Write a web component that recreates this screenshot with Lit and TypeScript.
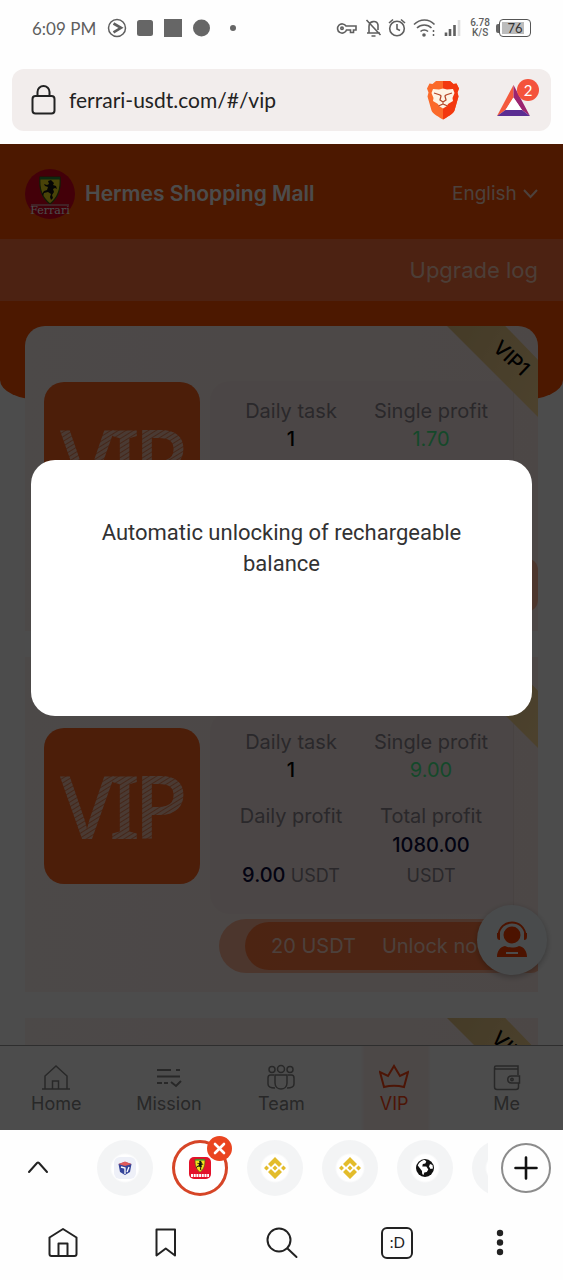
import { LitElement, html, css, svg, nothing } from "lit";
import { customElement, property } from "lit/decorators.js";

interface Terms {
  tasks: string;
  single: string;
  daily: string;
  total: string;
  price: string;
}

interface Plan {
  name: string;
  terms?: Terms;
}

const PLANS: Plan[] = [
  { name: "VIP1", terms: { tasks: "1", single: "1.70", daily: "1.70", total: "204", price: "5 USDT" } },
  { name: "VIP2", terms: { tasks: "1", single: "9.00", daily: "9.00", total: "1080.00", price: "20 USDT" } },
  { name: "VIP3" },
];

const crest = svg`
  <path d="M15 9h20c1 10-1 20-10 27C16 29 14 19 15 9z" fill="#f4e01c" stroke="#3c5a14" stroke-width="1.2"/>
  <path d="M15 9h20v2.600H15z" fill="#2b8a3a"/>
  <path d="M23 13l3-1 3 3-1 2 3 1 1 3-2-1-2 1 1 3-2 3 1 3-2 2-1-3 1-3-3-2-4 1-1 3-1-2 2-3 3-1 1-3-3-1-1-2 3 1 2-1z" fill="#111"/>`;

@customElement("status-bar")
class StatusBar extends LitElement {
  static styles = css`
    :host { display: flex; align-items: center; justify-content: space-between; height: 56px; padding: 0 32px; font-family: Lato, "Noto Sans", sans-serif; color: #5f5f5f; }
    .group { display: flex; align-items: center; }
    .left { gap: 8px; }
    .right { gap: 6px; }
    .time { font-size: 17px; }
    .rate { font: 500 10px/10px Roboto, sans-serif; text-align: center; }
    .battery { display: flex; align-items: center; }
    .nub { width: 3px; height: 9px; background: #666; border-radius: 2px 0 0 2px; }
    .cell { box-sizing: border-box; width: 32px; height: 18px; border: 1px solid #555; border-radius: 4px; padding: 2px; display: flex; }
    .charge { flex: 1; background: linear-gradient(90deg, #bcbcbc 84%, #fff 84%); font-size: 13px; line-height: 12px; text-align: center; color: #333; }
  `;
  render() {
    return html`
      <div class="group left">
        <span class="time">6:09 PM</span>
        <svg width="154" height="22" viewBox="0 0 154 22">
          <circle cx="13" cy="11" r="8.500" fill="none" stroke="#5f5f5f" stroke-width="1.500"/>
          <path d="M9.500 6.500l7.500 4.300-7.500 4.500" fill="none" stroke="#5f5f5f" stroke-width="2.600"/>
          <rect x="33" y="3" width="16" height="16" rx="2.500" fill="#666"/>
          <rect x="60" y="2" width="18" height="18" fill="#666"/>
          <circle cx="97.500" cy="11" r="8.500" fill="#666"/>
          <circle cx="129" cy="11" r="3" fill="#666"/>
        </svg>
      </div>
      <div class="group right">
        <svg width="128" height="22" viewBox="0 0 128 22" fill="none" stroke="#5f5f5f" stroke-width="1.600">
          <path d="M9.500 9H20v4h-2.500v2.500h-3V13h-4A4.600 4.600 0 1 1 10 9z"/>
          <circle cx="6" cy="11.200" r="1.200"/>
          <path d="M31 16h13M33 15.500V9.500c0-6 8-6.500 9-1.500v5M30.500 3l14 15M35.500 19h4"/>
          <circle cx="61" cy="11.500" r="7.300"/>
          <path d="M61 7v5l3 1.500M53 6l4-3.500M69 6l-4-3.500"/>
          <path d="M78 7.500c6-6 15-6 20.500 0M81 11c4-4 10.500-4 14.500 0M84.500 14.500c2-2 5.500-2 7.500 0"/>
          <circle cx="88" cy="18" r="1" fill="#5f5f5f"/>
          <path d="M97.500 13v2M97.500 17v2" stroke-width="1.500"/>
          <path d="M110 19v-3.500M114 19v-7M118.500 19V8" stroke-width="2.600"/>
          <path d="M123 19V3" stroke="#ddd" stroke-width="2.600"/>
        </svg>
        <div class="rate">6.78<br />K/S</div>
        <div class="battery"><span class="nub"></span><span class="cell"><span class="charge">76</span></span></div>
      </div>`;
  }
}

@customElement("address-bar")
class AddressBar extends LitElement {
  static styles = css`
    :host { display: block; padding: 13px 12px; }
    .bar { display: flex; align-items: center; height: 62px; border-radius: 12px; background: #f2edec; padding: 0 12px 0 19px; }
    .url { flex: 1; min-width: 0; border: 0; background: none; outline: 0; padding: 0; margin-left: 12px; font: 21px/30px Lato, "Noto Sans", sans-serif; color: #222; }
    .icon { border: 0; background: none; padding: 0; display: flex; position: relative; }
    .rewards { margin-left: 33px; }
    .count { position: absolute; right: 0; top: 0; width: 22px; height: 22px; border-radius: 50%; background: #f4533c; color: #fff; font: 15px/22px Lato, sans-serif; text-align: center; }
  `;
  render() {
    return html`
      <form class="bar" @submit=${(e: Event) => e.preventDefault()}>
        <svg width="26" height="32" viewBox="0 0 26 32" fill="none" stroke="#222" stroke-width="2">
          <rect x="1.500" y="12" width="22" height="17.500" rx="3"/>
          <path d="M6.500 12V8a6 6 0 0 1 12 0v4"/>
        </svg>
        <input class="url" aria-label="Address" value="ferrari-usdt.com/#/vip" />
        <button class="icon" type="button" aria-label="Shields">
          <svg width="34" height="42" viewBox="0 0 34 42">
            <path d="M10 2h14l3.500 3 3-.5 2.500 5-1.500 4 1 4-4 14c-1 3-8 7-11.500 9C13.500 38.500 6.500 34.500 5.500 31.500l-4-14 1-4L1 9.500l2.500-5 3 .5z" fill="#fb6a2a"/>
            <path d="M17 2h7l3.500 3 3-.5 2.500 5-1.500 4 1 4-4 14c-1 3-8 7-11.500 9z" fill="#f3380f"/>
            <path d="M7 10l6 .5 4-1 4 1 6-.5 1.500 4-2 5 .5 3-5 3-1 2-4 2.500-4-2.500-1-2-5-3 .5-3-2-5z" fill="#fdf3e4"/>
            <path d="M8 14l6 2 1 1-1 4 3 2 3-2-1-4 1-1 6-2M17 23v2M12.500 27l4.500-2 4.500 2" fill="none" stroke="#b5482a" stroke-width="1.300"/>
          </svg>
        </button>
        <button class="icon rewards" type="button" aria-label="Rewards">
          <svg width="46" height="42" viewBox="0 0 46 42">
            <path d="M20.500 6v12.500L12.500 31 4 37z" fill="#f4593c"/>
            <path d="M20.500 6L37 37l-8-6-8.500-12.500z" fill="#9b2470"/>
            <path d="M4 37l8.500-6H29l8 6z" fill="#5b2d92"/>
            <path d="M20.500 18.500L29 31H12.500z" fill="#fff"/>
          </svg>
          <span class="count">2</span>
        </button>
      </form>`;
  }
}

@customElement("vip-card")
class VipCard extends LitElement {
  @property({ attribute: false }) plan!: Plan;
  static styles = css`
    :host { display: block; position: relative; overflow: hidden; background: linear-gradient(90deg, #fdf3f1, #ffefec); min-height: 200px; }
    :host(:first-child) { border-radius: 20px 20px 0 0; }
    .inner { padding: 55px 0 19px 19px; }
    .ribbon { position: absolute; top: 0; right: 0; box-sizing: border-box; width: 91px; height: 91px; padding: 0 0 27px 37px; background: linear-gradient(120deg, #e6c684, #ffdc98); clip-path: polygon(0 0, 64% 0, 100% 37%, 100% 100%); display: grid; place-items: center; }
    .tier { font-size: 20px; font-weight: 500; line-height: 24px; color: #000; transform: rotate(43deg); }
    .body { display: flex; align-items: center; gap: 10px; margin-right: 24px; }
    .tile { flex: none; margin-bottom: 14px; border-radius: 20px; display: block; }
    .panel { flex: 1; min-width: 0; display: grid; grid-template-columns: 1fr 1fr; row-gap: 18px; padding: 16px 12px 23px 11px; background: #fbecea; border-right: 1px solid #f2e0dd; border-radius: 20px 4px 4px 20px; text-align: center; }
    .stat { display: flex; flex-direction: column; padding: 0 10px; }
    .label { color: #8e8790; line-height: 28px; }
    .value { margin-top: auto; color: #000; font-weight: 500; line-height: 28px; }
    .win { color: #48f28e; font-weight: 400; }
    .money { color: #0b0a3c; line-height: 30px; }
    .unit { font-size: 18px; font-weight: 400; color: #8e8790; }
    .unlock { display: block; margin: 5px 0 0 175px; padding: 3px 24px 3px 26px; border: 0; border-radius: 27px 12px 12px 27px; background: #ffb597; font: inherit; color: #ffd8c8; min-width: calc(100% - 175px); }
    .pill { display: flex; gap: 26px; padding: 0 26px; line-height: 48px; border-radius: 24px; background: linear-gradient(90deg, #ff783f, #ff7c45); white-space: nowrap; }
  `;
  details(t: Terms) {
    return html`
      <div class="inner">
        <div class="body">
          <svg class="tile" width="156" height="156" viewBox="0 0 156 156">
            <defs>
              <pattern id="hatch" width="4" height="4" patternUnits="userSpaceOnUse" patternTransform="rotate(-32)">
                <rect width="4" height="4" fill="#f8c4ab"/>
                <rect width="4" height="1" fill="#e98154"/>
              </pattern>
            </defs>
            <rect width="156" height="156" fill="#ff6420"/>
            <text y="111" fill="url(#hatch)" font-family="Noto Sans, sans-serif" font-weight="500" font-size="88"><tspan x="16">V</tspan><tspan x="65">I</tspan><tspan x="90">P</tspan></text>
          </svg>
          <div class="panel">
            <div class="stat"><span class="label">Daily task</span><span class="value">${t.tasks}</span></div>
            <div class="stat"><span class="label">Single profit</span><span class="value win">${t.single}</span></div>
            <div class="stat"><span class="label">Daily profit</span><span class="value money">${t.daily} <span class="unit">USDT</span></span></div>
            <div class="stat"><span class="label">Total profit</span><span class="value money">${t.total} <span class="unit">USDT</span></span></div>
          </div>
        </div>
        <button class="unlock"><span class="pill"><span>${t.price}</span><span>Unlock now</span></span></button>
      </div>`;
  }
  render() {
    const { name, terms } = this.plan;
    return html`
      <div class="ribbon"><span class="tier">${name}</span></div>
      ${terms ? this.details(terms) : nothing}`;
  }
}

const NAV = [
  { label: "Home", icon: svg`<path d="M1 25h28M4 25V12L15 2l11 10v13M11.500 25v-8h6v8"/>` },
  { label: "Mission", icon: svg`<path d="M3 6h14M22 6h4M3 12.500h23M3 19h5M10 19h4" stroke-width="2"/><path d="M17 18l5 4 5-5" stroke-width="2"/>` },
  { label: "Team", icon: svg`<circle cx="6" cy="5.500" r="3"/><circle cx="15" cy="5" r="3.500"/><circle cx="24" cy="5.500" r="3"/><path d="M9 11v8c0 8 12 8 12 0v-8zM8 11H4.500c-1.500 0-2.500 1-2.500 3v6c0 3 3 4 7 4M22 11h3.500c1.500 0 2.500 1 2.500 3v6c0 3-3 4-7 4"/>` },
  { label: "VIP", icon: svg`<path d="M5 23L1 8l8 4 6-10 6 10 8-4-4 15c-6-1.500-14-1.500-20 0z" stroke-width="2"/>`, active: true },
  { label: "Me", icon: svg`<path d="M26 5V2H4c-2 0-2 3 0 3h22v6M2.500 4v19c0 1.500 1 2.500 2.500 2.500h19c1.500 0 2.500-1 2.500-2.500v-4M27.500 12h-8c-5 0-5 7 0 7h8z"/><circle cx="20" cy="15.500" r="1.200"/>` },
];

@customElement("vip-page")
class VipPage extends LitElement {
  static styles = css`
    :host { display: flex; flex-direction: column; position: relative; overflow: hidden; background: #fff; font-family: Inter, "Noto Sans", sans-serif; font-size: 20px; }
    .scroll { flex: 1; min-height: 0; overflow: hidden; }
    .hero { background: #ff5000; height: 256px; border-radius: 0 0 42px 42px / 0 0 20px 20px; overflow: hidden; }
    .head { display: flex; align-items: center; height: 95px; padding: 5px 25px 0; box-sizing: border-box; color: #fff; }
    .logo { flex: none; }
    .title { flex: 1; margin: 0 0 0 10px; font-size: 21px; font-weight: 600; line-height: 30px; }
    .lang { display: flex; align-items: center; gap: 6px; color: #ffd9c8; }
    .pick { appearance: none; border: 0; background: none; padding: 0; font: 19px/26px Inter, sans-serif; color: inherit; }
    .log { display: flex; justify-content: flex-end; align-items: center; height: 62px; padding: 0 25px; background: #ff723f; }
    .link { color: #ffd0ba; font-size: 22px; line-height: 28px; text-decoration: none; }
    .list { position: relative; display: flex; flex-direction: column; gap: 26px; margin: -74px 25px 0; }
    .support { position: absolute; right: 16px; bottom: 155px; width: 70px; height: 70px; border: 0; padding: 0; border-radius: 50%; background: #f5fcff; display: grid; place-items: center; box-shadow: 0 2px 6px #0004; }
    .nav { flex: none; height: 84px; display: grid; grid-template-columns: repeat(5, 1fr); background: #fff; border-top: 1px solid #999; }
    .item { display: flex; flex-direction: column; align-items: center; padding-top: 18px; gap: 1px; text-decoration: none; color: #858585; font-size: 18px; line-height: 24px; }
    .glyph { fill: none; stroke: currentColor; stroke-width: 1.5; }
    .on { color: #ff4614; background: linear-gradient(90deg, #fff 20%, #fff1ee 24%, #fff1ee 80%, #fff 83%); }
    .shade { position: absolute; inset: 0; background: rgba(0, 0, 0, 0.7); display: flex; align-items: center; justify-content: center; padding: 0 31px 98px; }
    .dialog { box-sizing: border-box; width: 100%; min-height: 256px; border-radius: 24px; background: #fff; padding: 57px 60px; text-align: center; font: 22px/31px Roboto, sans-serif; color: #323233; }
    .message { margin: 0; }
  `;
  render() {
    return html`
      <div class="scroll">
        <div class="hero">
          <header class="head">
            <svg class="logo" width="50" height="50" viewBox="0 0 50 50">
              <circle cx="25" cy="25" r="25" fill="#e00020"/>
              <g transform="translate(0 -1)">${crest}</g>
              <path d="M6 36h38" stroke="#ddd"/>
              <text x="25" y="45" text-anchor="middle" font-family="DejaVu Serif, serif" font-size="11" fill="#fff">Ferrari</text>
            </svg>
            <h1 class="title">Hermes Shopping Mall</h1>
            <label class="lang">
              <select class="pick" aria-label="Language"><option>English</option></select>
              <svg width="15" height="10" viewBox="0 0 15 10" fill="none" stroke="currentColor" stroke-width="2"><path d="M1 1l6.500 7L14 1"/></svg>
            </label>
          </header>
          <div class="log"><a class="link" href="#/log">Upgrade log</a></div>
        </div>
        <main class="list">${PLANS.map((p) => html`<vip-card .plan=${p}></vip-card>`)}</main>
      </div>
      <button class="support" aria-label="Customer service">
        <svg width="32" height="38" viewBox="0 0 32 38">
          <circle cx="16" cy="14" r="8.500" fill="#ff4000"/>
          <path d="M2.500 15C3 -3 29 -3 29.500 15" fill="none" stroke="#ff4000" stroke-width="2"/>
          <path d="M1 12h3v7c-2 0-3-1-3-4zM31 12h-3v7c2 0 3-1 3-4z" fill="#ff4000"/>
          <path d="M1 36c0-6 3-10 8-11 4 2 10 2 14 0 5 1 8 5 8 11z" fill="#ff4000"/>
          <path d="M10 32h12" stroke="#fff" stroke-width="2"/>
        </svg>
      </button>
      <nav class="nav">
        ${NAV.map((n) => html`
          <a class="item ${n.active ? "on" : ""}" href="#/${n.label.toLowerCase()}" aria-current=${n.active ? "page" : nothing}>
            <svg class="glyph" width="30" height="27" viewBox="0 0 30 27">${n.icon}</svg>
            <span>${n.label}</span>
          </a>`)}
      </nav>
      <div class="shade">
        <div class="dialog" role="dialog" aria-modal="true" aria-labelledby="msg"><p class="message" id="msg">Automatic unlocking of rechargeable balance</p></div>
      </div>`;
  }
}

const coin = svg`
  <g fill="#e3bc2b">
    <path d="M28 17l7 7-3 3-4-4-4 4-3-3zM28 39l7-7-3-3-4 4-4-4-3 3zM28 25.500l2.500 2.500-2.500 2.500-2.500-2.500zM19.500 25.500l2.500 2.500-2.500 2.500-2.500-2.500zM36.500 25.500l2.500 2.500-2.500 2.500-2.500-2.500z"/>
  </g>`;

const TABS = [
  { name: "Shop", icon: svg`<rect x="17" y="17" width="22" height="22" rx="6" fill="#eef0f8"/><path d="M21.500 24l6.500-2 6.500 2-1.500 8-5 3-5-3z" fill="#35449a"/><path d="M21.500 24l6.500-2.500 6.500 2.500-6.500 2z" fill="#e05a5a"/><path d="M24 27l4 1v6M32 27l-2 5" stroke="#fff" stroke-width="1.300" fill="none"/>` },
  { name: "Ferrari", active: true, icon: svg`<rect x="17" y="17" width="22" height="22" rx="5" fill="#e3122a"/><g transform="translate(16 15) scale(.48)">${crest}</g><path d="M19 35.500h18" stroke="#fff" stroke-width="3" stroke-dasharray="2 .7"/>` },
  { name: "Exchange", icon: coin },
  { name: "Exchange", icon: coin },
  { name: "Web", icon: svg`<circle cx="28" cy="28" r="9" fill="#111"/><path d="M20.800 25.500c1-3 4-5.500 7-5.500l1.500 1.500-1 2-2.500.5-.5 2.500h4l2 3-1.500 2.500-2.500.5-.8 2.500c-1.500-.5-1.500-2.500-1.500-4zM33 24l2.500 1 .5 3.500-2.500.5-1.500-2.500z" fill="#fff"/>` },
  { name: "Next", icon: nothing },
];

@customElement("tab-strip")
class TabStrip extends LitElement {
  static styles = css`
    :host { display: flex; align-items: center; height: 75px; padding: 0 12px 0 22px; }
    .plain { border: 0; background: none; padding: 0; display: flex; }
    .tabs { flex: 1; min-width: 0; display: flex; gap: 19px; overflow: hidden; margin: 0 13px 0 43px; padding: 8px 0; }
    .tab { flex: none; position: relative; box-sizing: border-box; width: 56px; height: 56px; border: 0; padding: 0; border-radius: 50%; background: radial-gradient(circle, #fff 13px, #f3f4f5 15px); }
    .current { background: #fff; box-shadow: inset 0 0 0 3px #d64527; }
    .close { position: absolute; right: -4px; top: -4px; width: 25px; height: 25px; border-radius: 50%; background: #ea4520; }
    .add { width: 50px; height: 50px; box-sizing: border-box; border: 2px solid #8c8c8c; border-radius: 50%; background: none; display: grid; place-items: center; padding: 0; }
  `;
  render() {
    return html`
      <button class="plain" aria-label="Expand">
        <svg width="32" height="20" viewBox="0 0 32 20" fill="none" stroke="#222" stroke-width="2" stroke-linecap="round"><path d="M7 14l8-9q1-1 2 0l8 9"/></svg>
      </button>
      <div class="tabs">
        ${TABS.map((t) => html`
          <button class="tab ${t.active ? "current" : ""}" aria-label=${t.name}>
            <svg width="56" height="56" viewBox="0 0 56 56">${t.icon}</svg>
            ${t.active ? html`<svg class="close" viewBox="0 0 25 25"><path d="M8 8l9 9M17 8l-9 9" stroke="#fff" stroke-width="2.600" stroke-linecap="round"/></svg>` : nothing}
          </button>`)}
      </div>
      <button class="add" aria-label="New tab">
        <svg width="24" height="24" viewBox="0 0 24 24" stroke="#111" stroke-width="2.600" stroke-linecap="round"><path d="M12 1.500v21M1.500 12h21"/></svg>
      </button>`;
  }
}

@customElement("tool-bar")
class ToolBar extends LitElement {
  static styles = css`
    :host { display: flex; align-items: center; justify-content: space-between; height: 75px; padding: 0 47px; }
    .tool { border: 0; background: none; padding: 0; width: 32px; height: 34px; display: grid; place-items: center; }
    .wide { width: 58px; }
    .count { box-sizing: border-box; width: 32px; height: 32px; border: 2px solid #222; border-radius: 6px; font: 15px/27px Lato, sans-serif; color: #222; }
  `;
  render() {
    const line = (shape: unknown) => html`<svg width="32" height="34" viewBox="0 0 32 34" fill="none" stroke="#222" stroke-width="2" stroke-linejoin="round" stroke-linecap="round">${shape}</svg>`;
    return html`
      <button class="tool" aria-label="Home">${line(svg`<path d="M2.500 11.500L16 3l13.500 8.500V28q0 2-2 2h-23q-2 0-2-2zM11.500 30V17.500h9V30"/>`)}</button>
      <button class="tool" aria-label="Bookmarks">${line(svg`<path d="M6.500 3.500h18.500v26l-9.250-7-9.250 7z"/>`)}</button>
      <button class="tool wide" aria-label="Search">${line(svg`<circle cx="13" cy="14" r="11.500"/><path d="M21.500 22.500L30.500 31"/>`)}</button>
      <button class="tool" aria-label="Tabs"><span class="count">:D</span></button>
      <button class="tool" aria-label="Menu"><svg width="32" height="34" viewBox="0 0 32 34" fill="#222"><circle cx="16" cy="7" r="3.200"/><circle cx="16" cy="16.500" r="3.200"/><circle cx="16" cy="26" r="3.200"/></svg></button>`;
  }
}

@customElement("app-root")
class AppRoot extends LitElement {
  static styles = css`
    :host { display: flex; flex-direction: column; height: 100vh; background: #fefefe; }
    .page { flex: 1; min-height: 0; }
  `;
  render() {
    return html`
      <status-bar></status-bar>
      <address-bar></address-bar>
      <vip-page class="page"></vip-page>
      <tab-strip></tab-strip>
      <tool-bar></tool-bar>`;
  }
}
